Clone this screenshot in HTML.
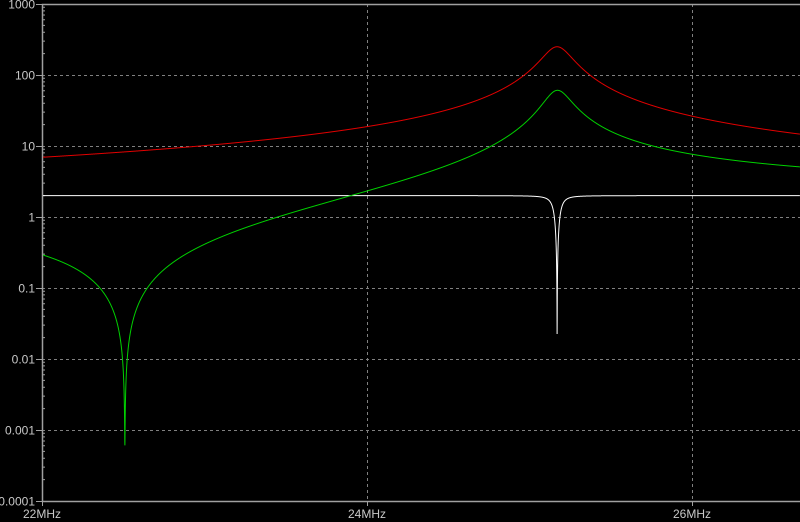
<!DOCTYPE html>
<html><head><meta charset="utf-8">
<style>
html,body{margin:0;padding:0;background:#000;width:800px;height:522px;overflow:hidden}
svg{display:block}
text{font-family:"Liberation Sans",sans-serif;font-size:12px;fill:#c8c8c8}
</style></head>
<body>
<svg id="s" width="800" height="522" viewBox="0 0 800 522" xmlns="http://www.w3.org/2000/svg"></svg>
<script>
(function(){
var s=document.getElementById('s');
var NS='http://www.w3.org/2000/svg';
function el(t,a,txt){var e=document.createElementNS(NS,t);for(var k in a)e.setAttribute(k,a[k]);if(txt)e.textContent=txt;s.appendChild(e);return e;}
var T0=4,dec=71,L=42;
function Y(v){return T0+(3-Math.log10(v))*dec;}
var labels=['1000','100','10','1','0.1','0.01','0.001','0.0001'];
for(var i=0;i<8;i++){
  var y=T0+i*dec;
  if(i>0&&i<7) el('line',{x1:L,y1:y+.5,x2:800,y2:y+.5,stroke:'#808080','stroke-dasharray':'3,3'});
  el('line',{x1:36,y1:y+.5,x2:L,y2:y+.5,stroke:'#a0a0a0'});
  el('text',{x:35,y:y+4.5,'text-anchor':'end'},labels[i]);
  if(i<7){for(var m=2;m<10;m++){var yy=y+dec-Math.log10(m)*dec;el('line',{x1:L,y1:yy,x2:L+3,y2:yy,stroke:'#a0a0a0'});}}
}
[367,692].forEach(function(x){x+=.5;el('line',{x1:x,y1:T0,x2:x,y2:501,stroke:'#808080','stroke-dasharray':'3,3'});el('line',{x1:x,y1:501,x2:x,y2:506,stroke:'#a0a0a0'});});
el('line',{x1:L+.5,y1:501,x2:L+.5,y2:506,stroke:'#a0a0a0'});
el('text',{x:42,y:518,'text-anchor':'middle'},'22MHz');
el('text',{x:367,y:518,'text-anchor':'middle'},'24MHz');
el('text',{x:692,y:518,'text-anchor':'middle'},'26MHz');
el('rect',{x:L+.5,y:T0+.5,width:800,height:497,fill:'none',stroke:'#a0a0a0','stroke-width':1.5});
var f0=25.17,fn=22.51;
function red(f){var d=f-f0;return 22/Math.sqrt(d*d+0.088*0.088);}
function grn(f){var d=f-f0,n=f-fn;return 1.83*Math.sqrt(n*n+0.00087*0.00087)/Math.sqrt(d*d+0.08*0.08);}
function wht(f){var d=f-f0;return 2*Math.sqrt((d*d+0.0003*0.0003)/(d*d+0.03*0.03));}
function path(fnc,col){var d='';for(var x=43;x<=800;x+=0.1){var f=22+(x-L)/162.5;var v=fnc(f);var y=Y(v);d+=(d?'L':'M')+x.toFixed(1)+' '+y.toFixed(2);}
el('path',{d:d,fill:'none',stroke:col,'stroke-width':1});}
path(wht,'#ffffff');
path(red,'#e00000');
path(grn,'#00d000');
})();
</script>
</body></html>
